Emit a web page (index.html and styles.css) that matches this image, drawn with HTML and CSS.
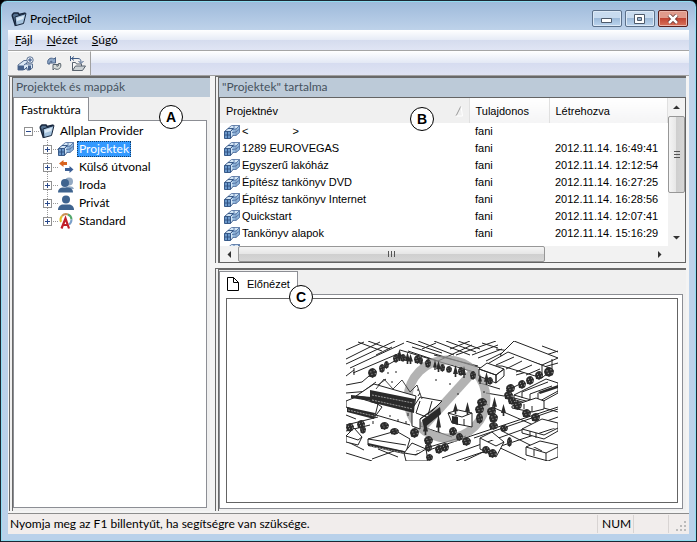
FILE: index.html
```html
<!DOCTYPE html>
<html lang="hu">
<head>
    <meta charset="UTF-8">
    <meta name="viewport" content="width=device-width, initial-scale=1.0">
    <title>ProjectPilot</title>
    <link rel="stylesheet" href="styles.css">
</head>
<body>
    <!-- shared icon shapes -->
    <svg class="defs" aria-hidden="true">
        <symbol id="folder" viewBox="0 0 16 16">
            <path d="M1 4l2-2h4l1 1.500 6-1.500v3L5 14.500z" fill="#54708f"/>
            <path d="M1 4l3.500 11M1 4l2-2h4l1 1.500 6.500-1.500" fill="none" stroke="#17263c" stroke-width="1.500"/>
            <path d="M4 6l11-3.500-2.500 10L5 14.500z" fill="#a5c3de" stroke="#17263c"/>
            <path d="M5.500 7l7.500-2.300-.8 3.300L6 10z" fill="#dbe9f5"/>
        </symbol>
        <symbol id="project" viewBox="0 0 16 14">
            <path d="M.5 6.500L7 1l8.500-.5v7.500l-4 3H8l-1.500 2.500h-6z" fill="#d3e5f5"/>
            <path d="M8.500 4l3-1v7h-3zM12.500 3.500l3-2.500v6.500l-3 2.500z" fill="#8fb5db"/>
            <path d="M4 3.500L7.500.5H15.500v7L12 10.500H8.500M8 4.500L12 4l3.500-3.500M12 4v6.500M8 7.500l4-.5 3.500-3M6.500 6.500L10 3V.5" stroke="#47689a" stroke-width=".8" fill="none"/>
            <path d="M.5 6.500h6v7h-6z" fill="#6b98ca" stroke="#2c4f80" stroke-width=".9"/>
            <path d="M.5 6.500L4 3.500h5L6.500 6.500M6.500 13.500L9 10.500M3.500 6.500v7M.5 10h6" stroke="#2c4f80" stroke-width=".9" fill="none"/>
        </symbol>
        <symbol id="person" viewBox="0 0 16 16">
            <circle cx="8" cy="4.500" r="4"/>
            <path d="M0 15c0-4 3-5.500 5-5.500h6c2 0 5 1.500 5 5.500z"/>
        </symbol>
        <symbol id="bush" viewBox="0 0 8 8" preserveAspectRatio="none">
            <path d="M4 0L5.500.3 7 1.500 8 3 7.600 5 7 6.500 5 7.300 4 8 3 7.300 1 7 .6 5.500 0 4 .5 2 2 .6z" fill="#2b2b2b"/>
            <path d="M2 3h1M5 2h1M3 5h1M6 4.500h1" stroke="#8a8a8a"/>
        </symbol>
        <symbol id="fir" viewBox="0 0 6 12" preserveAspectRatio="none">
            <path d="M3 0L4 3 5 6 6 9H4v3H2V9H0l1-3 1-3z" fill="#2b2b2b"/>
        </symbol>
    </svg>

    <div class="window">
        <header class="titlebar">
            <svg class="title-icon"><use href="#folder"/></svg>
            <span class="title">ProjectPilot</span>
            <div class="window-buttons">
                <button type="button" aria-label="Kis méret"><svg viewBox="0 0 14 10"><path d="M1.500 4.500h10v4h-10z" fill="#fff" stroke="#4d5a6b"/></svg></button>
                <button type="button" aria-label="Teljes méret"><svg viewBox="0 0 14 10"><path d="M1.500.5h10v9h-10z" fill="#fff" stroke="#4d5a6b"/><path d="M4.500 3.500h4v3h-4z" fill="#9ab4d0" stroke="#4d5a6b"/></svg></button>
                <button type="button" class="close" aria-label="Bezárás"><svg viewBox="0 0 14 10"><path d="M3 1l8 8M11 1l-8 8" stroke="#5c2a28" stroke-width="4"/><path d="M3 1l8 8M11 1l-8 8" stroke="#fff" stroke-width="2.500"/></svg></button>
            </div>
        </header>

        <nav class="menubar">
            <a href="#"><u>F</u>ájl</a>
            <a href="#"><u>N</u>ézet</a>
            <a href="#"><u>S</u>úgó</a>
        </nav>

        <div class="toolbar">
            <div class="tools">
                <button type="button" aria-label="Új projekt">
                    <svg viewBox="0 0 18 16">
                        <path d="M1 9l6-4.500h4.500L9 8h6.500v4l-3 2H10v-2L6 14H1z" fill="#dce8f4" stroke="#5b7192"/>
                        <path d="M1 9.500h6V14H1zM11 9.500h3V14h-3z" fill="#46618a"/>
                        <path d="M7 14l3-3M7 9l3-2" stroke="#46618a" fill="none"/>
                        <circle cx="13" cy="4" r="3.200" fill="#eef3fa" stroke="#5b7192"/>
                        <path d="M13 2v4M11 4h4" stroke="#2f4d7e"/>
                    </svg>
                </button>
                <span class="divider"></span>
                <button type="button" aria-label="Frissítés">
                    <svg viewBox="0 0 18 16">
                        <path d="M2 8C.5 4 4 .5 8 3l1.500-1.500V7H4.500L6 5.500C4.500 4.500 3.500 6 4 8z" fill="#8fa9c9" stroke="#4c6489"/>
                        <path d="M14.500 7.500c1.500 4-2 7.500-6 5L7 14V8.500h5L10.500 10c1.500 1 2.500-.5 2-2.500z" fill="#d6dbd8" stroke="#59656e"/>
                    </svg>
                </button>
                <button type="button" aria-label="Megnyitás">
                    <svg viewBox="0 0 18 16">
                        <path d="M3.500 14.500v-8h3l1 1.500h5v2.500" fill="#f7f7f7" stroke="#59636e"/>
                        <path d="M3.500 14.500l3-4.500h10l-3 4.500z" fill="#cdd3d6" stroke="#59636e"/>
                        <path d="M1.500 0v5M1.500 2.500H9c2 0 3 1 3 4M5 .5l-2.500 2L5 4.500M9.500 5l2.500 2.500L14.500 5" stroke="#3f5b85" fill="none"/>
                    </svg>
                </button>
            </div>
        </div>

        <main class="content">
            <section class="side">
                <h2 class="caption">Projektek és mappák</h2>
                <button type="button" class="tab">Fastruktúra</button>
                <div class="tree">
                    <div class="node root">
                        <button type="button" class="toggle" aria-label="Összecsukás"><svg viewBox="0 0 9 9"><path d="M2 4.500h5"/></svg></button>
                        <span class="dots"></span>
                        <svg class="node-icon"><use href="#folder"/></svg>
                        <a href="#">Allplan Provider</a>
                    </div>
                    <ul class="branch">
                        <li class="node">
                            <button type="button" class="toggle" aria-label="Kibontás"><svg viewBox="0 0 9 9"><path d="M2 4.500h5M4.500 2v5"/></svg></button>
                            <span class="dots"></span>
                            <svg class="node-icon"><use href="#project"/></svg>
                            <a href="#" class="selected">Projektek</a>
                        </li>
                        <li class="node">
                            <button type="button" class="toggle" aria-label="Kibontás"><svg viewBox="0 0 9 9"><path d="M2 4.500h5M4.500 2v5"/></svg></button>
                            <span class="dots"></span>
                            <svg class="node-icon" viewBox="0 0 16 16">
                                <path d="M1 4.500l4.500-3.500v2H9v3H5.500V8z" fill="#d9641e"/>
                                <path d="M15.500 10.500l-4-3.500v2H7v3h4.500v2z" fill="#3c5f96"/>
                            </svg>
                            <a href="#">Külső útvonal</a>
                        </li>
                        <li class="node">
                            <button type="button" class="toggle" aria-label="Kibontás"><svg viewBox="0 0 9 9"><path d="M2 4.500h5M4.500 2v5"/></svg></button>
                            <span class="dots"></span>
                            <svg class="node-icon" viewBox="0 0 16 16">
                                <circle cx="11" cy="4.500" r="4" fill="#93a9c2"/>
                                <path d="M7 12c0-3 8-4 9 0z" fill="#93a9c2"/>
                                <circle cx="7" cy="6" r="4" fill="#3f648f"/>
                                <path d="M0 15.500c0-4 3-5 5-5h4c3 0 6 1 6 5z" fill="#3f648f"/>
                            </svg>
                            <a href="#">Iroda</a>
                        </li>
                        <li class="node">
                            <button type="button" class="toggle" aria-label="Kibontás"><svg viewBox="0 0 9 9"><path d="M2 4.500h5M4.500 2v5"/></svg></button>
                            <span class="dots"></span>
                            <svg class="node-icon person"><use href="#person"/></svg>
                            <a href="#">Privát</a>
                        </li>
                        <li class="node">
                            <button type="button" class="toggle" aria-label="Kibontás"><svg viewBox="0 0 9 9"><path d="M2 4.500h5M4.500 2v5"/></svg></button>
                            <span class="dots"></span>
                            <svg class="node-icon" viewBox="0 0 16 16">
                                <g fill="none" stroke-width="2">
                                    <path d="M3 9a5.500 5.500 0 0 1 1-6" stroke="#e2c12e"/>
                                    <path d="M4 3a5.500 5.500 0 0 1 6-1.500" stroke="#c99056"/>
                                    <path d="M10 1.500a5.500 5.500 0 0 1 3.500 5" stroke="#52a76a"/>
                                    <path d="M13.500 6.500a6 6 0 0 1-2.500 5" stroke="#7a9fc9"/>
                                </g>
                                <path d="M3.500 15.500L7.500 5.500 11 15.500M5 12h5" fill="none" stroke="#c2202a" stroke-width="2.200"/>
                            </svg>
                            <a href="#">Standard</a>
                        </li>
                    </ul>
                </div>
                <span class="marker marker-a">A</span>
            </section>

            <div class="main">
                <section class="list-panel">
                    <h2 class="caption">"Projektek" tartalma</h2>
                    <div class="list-box">
                        <div class="list">
                            <table>
                                <thead>
                                    <tr>
                                        <th class="col-name"><span class="sort-head">Projektnév <svg viewBox="0 0 8 12"><path d="M1 11L6 1" stroke="#999"/><path d="M6 1l1.500 10H1" stroke="#fff" fill="none"/></svg></span></th>
                                        <th class="col-owner">Tulajdonos</th>
                                        <th>Létrehozva</th>
                                    </tr>
                                </thead>
                                <tbody>
                                    <tr><td><svg><use href="#project"/></svg><span class="blank-name"><span>&lt;</span><span>&gt;</span></span></td><td>fani</td><td></td></tr>
                                    <tr><td><svg><use href="#project"/></svg>1289 EUROVEGAS</td><td>fani</td><td>2012.11.14. 16:49:41</td></tr>
                                    <tr><td><svg><use href="#project"/></svg>Egyszerű lakóház</td><td>fani</td><td>2012.11.14. 12:12:54</td></tr>
                                    <tr><td><svg><use href="#project"/></svg>Építész tankönyv DVD</td><td>fani</td><td>2012.11.14. 16:27:25</td></tr>
                                    <tr><td><svg><use href="#project"/></svg>Építész tankönyv Internet</td><td>fani</td><td>2012.11.14. 16:28:56</td></tr>
                                    <tr><td><svg><use href="#project"/></svg>Quickstart</td><td>fani</td><td>2012.11.14. 12:07:41</td></tr>
                                    <tr><td><svg><use href="#project"/></svg>Tankönyv alapok</td><td>fani</td><td>2012.11.14. 15:16:29</td></tr>
                                    <tr><td><svg><use href="#project"/></svg></td><td></td><td></td></tr>
                                </tbody>
                            </table>
                        </div>
                        <div class="scroll-v">
                            <button type="button" aria-label="Fel"><svg viewBox="0 0 7 7"><path d="M0 5l3.500-3.500L7 5z"/></svg></button>
                            <span class="thumb"><svg viewBox="0 0 8 8"><path d="M1 .5h6M1 3.500h6M1 6.500h6"/></svg></span>
                            <span class="track"></span>
                            <button type="button" aria-label="Le"><svg viewBox="0 0 7 7"><path d="M0 2l3.500 3.500L7 2z"/></svg></button>
                        </div>
                        <div class="scroll-h">
                            <button type="button" aria-label="Balra"><svg viewBox="0 0 7 7"><path d="M5 0L1.500 3.500 5 7z"/></svg></button>
                            <span class="thumb"><svg viewBox="0 0 8 8"><path d="M.5 1v6M3.500 1v6M6.500 1v6"/></svg></span>
                            <span class="track"></span>
                            <button type="button" aria-label="Jobbra"><svg viewBox="0 0 7 7"><path d="M2 0l3.500 3.500L2 7z"/></svg></button>
                        </div>
                    </div>
                    <span class="marker marker-b">B</span>
                </section>

                <section class="preview-panel">
                    <button type="button" class="tab preview-tab">
                        <svg viewBox="0 0 12 14"><path d="M.5.5h6l5 5v8H.5zM6.500.5v5h5" fill="#fff" stroke="#000"/></svg>
                        Előnézet
                    </button>
                    <div class="preview-page">
                        <div class="preview">
                            <svg class="scene" viewBox="0 0 212 120" role="img" aria-label="Előnézet">
                                <!-- roads and plot lines -->
                                <g fill="none" stroke="#222">
                                    <path d="M0 9L18 1M0 23L49 0M4 27L58 2M12 1l24 9M22 0l22 8M60 0l36 12M72 0l36 14M7 32L54 12M0 35l8-6M36 27l18-10M62 10l30 10 34-16M88 0l36 14M100 0l30 11M112 0l22 8M104 8L124 0M110 14L150 0"/>
                                    <path d="M0 44l16-3 14-12M0 52l24-2M8 57l22-16M24 50L40 38M0 66l30-4M0 84l32-8M0 90l24-6M0 112l26 8M22 100l26 10-22 8M32 108l20 8M42 104l20 9M0 100l18 9"/>
                                    <path d="M62 116L212 66M96 117L212 76M110 120L212 86M70 110l50-15M128 97L212 68M140 52l18 3M146 66l46 20M166 58l46 13M118 120l32-15M150 105l30 14M156 90l40 20"/>
                                    <path d="M134 42l20 6M170 34l42-12M176 22l36-12M160 50l12-6M134 60l8 4M196 5l16 6M150 8l14 2"/>
                                    <path d="M54 9L128 31M66 6l72 22M88 14l44 11M76 8l14-6M126 14l26-10M132 17l24-9M140 20l18-9M0 18l34-17M30 14l16-8M136 2l16 5M8 34v-7M0 74l10 4M66 82l40 14M30 74l34 10"/>
                                </g>
                                <!-- no-entry ring -->
                                <g class="ring" fill="none" stroke="#999" stroke-opacity=".75">
                                    <circle cx="101" cy="58" r="39"/>
                                    <path d="M77 86L126 32"/>
                                </g>
                                <!-- buildings -->
                                <g fill="#fff" stroke="#222">
                                    <path d="M154 14l14-14 44 17-16 7-12-4z"/>
                                    <path d="M138 25l24-14 44 17-10 9-40-12zM150 24l18-8M160 28l16-8M170 31l16-7M180 34l14-6M196 24v12M206 18v10"/>
                                    <path d="M133 28l8-6 17 6-8 6zM133 28v7l17 7v-8zM150 34l8-6v7l-8 7z"/>
                                    <path d="M0 60l10-4 22 7-3 12-29-9zM30 62l6 4-8 11"/>
                                    <path d="M22 98l28-8 14 8-4 13-38-7zM22 98l38 6"/>
                                    <path d="M10 55l18-12 42 12-2 12-44-10z"/>
                                    <path d="M66 68l8-12 22 4-10 10-12 8v10l-8-3zM74 60l-4 12 16 6M86 60l-4 14M74 78l16-12 6-6"/>
                                    <path d="M168 54l32-16 12 4v10l-20 11-24-6zM168 54l24 7 20-11M176 57v-6l26-10M184 59v-6l22-8M192 52v8"/>
                                    <path d="M166 65l24-8 8 3v8l-12 3-20-4zM178 63v5M186 65v6"/>
                                    <path d="M176 88l20-10 16 4v8l-14 8-22-6zM176 88l22 6 14-7M184 90v5M190 92v5"/>
                                    <path d="M180 106l14-6 18 4v12l-10 4-22-6zM180 106l20 6 12-6M188 109v6M200 112v8"/>
                                    <path d="M134 97l12-6 12 10-8 15-16-8zM134 97l16 8 8-4"/>
                                    <path d="M58 112l8-10 14 6 2 12H60zM58 112l12 2 10-6M0 95l8-8 8 9-4 8-12-3zM0 95l12 4 4-3"/>
                                    <path d="M102 72l10-3 14 3v14l-20-4zM102 72l14 4 10-4M110 75v8M118 78v6"/>
                                </g>
                                <!-- dark facades -->
                                <g fill="#2a2a2a">
                                    <path d="M24 49l45 9-1 14-44-11z"/>
                                    <path d="M1 66l28 6-1 6-27-7zM22 102l36 8v3l-36-8zM5 54l20 2v4L5 57z"/>
                                    <path d="M76 79l18-13 1 7-17 14z"/>
                                    <path d="M106 75l6 1v8l-6-2zM192 51l20-7v3l-18 6z"/>
                                </g>
                                <g fill="none" stroke="#999" stroke-dasharray="2 1">
                                    <path d="M26 54l41 8M26 59l41 9M2 69l26 6M24 105l34 7"/>
                                </g>
                                <path d="M30 48l8-10 9 10 9-9 8 12 7-7 5 14" fill="none" stroke="#444"/>
                                <!-- trees -->
                                <g>
                                    <use href="#bush" x="22" y="27" width="9" height="10"/>
                                    <use href="#bush" x="33" y="23" width="6" height="9"/>
                                    <use href="#bush" x="38" y="20" width="5" height="8"/>
                                    <use href="#bush" x="47" y="13" width="6" height="9"/>
                                    <use href="#fir" x="51" y="8" width="5" height="12"/>
                                    <use href="#bush" x="54" y="13" width="6" height="8"/>
                                    <use href="#fir" x="59" y="11" width="5" height="12"/>
                                    <use href="#fir" x="62" y="13" width="5" height="10"/>
                                    <use href="#bush" x="68" y="14" width="7" height="9"/>
                                    <use href="#bush" x="73" y="16" width="4" height="8"/>
                                    <use href="#bush" x="79" y="18" width="6" height="9"/>
                                    <use href="#fir" x="87" y="19" width="4" height="10"/>
                                    <use href="#fir" x="90" y="20" width="5" height="11"/>
                                    <use href="#bush" x="94" y="23" width="5" height="8"/>
                                    <use href="#bush" x="100" y="25" width="6" height="7"/>
                                    <use href="#fir" x="107" y="24" width="5" height="12"/>
                                    <use href="#bush" x="112" y="26" width="6" height="9"/>
                                    <use href="#fir" x="116" y="25" width="4" height="12"/>
                                    <use href="#bush" x="124" y="30" width="6" height="9"/>
                                    <use href="#fir" x="132" y="33" width="4" height="10"/>
                                    <use href="#fir" x="138" y="31" width="5" height="13"/>
                                    <use href="#bush" x="141" y="36" width="6" height="8"/>
                                    <use href="#bush" x="160" y="43" width="9" height="9"/>
                                    <use href="#bush" x="158" y="50" width="9" height="9"/>
                                    <use href="#bush" x="162" y="56" width="8" height="8"/>
                                    <use href="#bush" x="167" y="60" width="9" height="9"/>
                                    <use href="#bush" x="172" y="39" width="8" height="9"/>
                                    <use href="#bush" x="180" y="35" width="8" height="9"/>
                                    <use href="#bush" x="189" y="30" width="8" height="9"/>
                                    <use href="#bush" x="198" y="26" width="10" height="10"/>
                                    <use href="#bush" x="176" y="68" width="9" height="9"/>
                                    <use href="#bush" x="185" y="72" width="9" height="9"/>
                                    <use href="#bush" x="131" y="57" width="10" height="9"/>
                                    <use href="#bush" x="129" y="64" width="9" height="9"/>
                                    <use href="#bush" x="130" y="72" width="7" height="11"/>
                                    <use href="#bush" x="141" y="66" width="9" height="9"/>
                                    <use href="#bush" x="143" y="72" width="9" height="10"/>
                                    <use href="#fir" x="146" y="56" width="5" height="13"/>
                                    <use href="#fir" x="155" y="63" width="5" height="12"/>
                                    <use href="#bush" x="143" y="81" width="9" height="8"/>
                                    <use href="#bush" x="154" y="84" width="8" height="7"/>
                                    <use href="#fir" x="119" y="61" width="5" height="13"/>
                                    <use href="#fir" x="107" y="62" width="5" height="11"/>
                                    <use href="#fir" x="90" y="73" width="5" height="18"/>
                                    <use href="#fir" x="77" y="80" width="5" height="14"/>
                                    <use href="#bush" x="34" y="81" width="9" height="8"/>
                                    <use href="#bush" x="44" y="87" width="9" height="7"/>
                                    <use href="#bush" x="0" y="82" width="8" height="9"/>
                                    <use href="#bush" x="11" y="79" width="8" height="9"/>
                                    <use href="#bush" x="14" y="85" width="6" height="8"/>
                                    <use href="#bush" x="64" y="87" width="9" height="10"/>
                                    <use href="#bush" x="78" y="95" width="9" height="9"/>
                                    <use href="#bush" x="79" y="102" width="7" height="9"/>
                                    <use href="#bush" x="89" y="104" width="8" height="9"/>
                                    <use href="#bush" x="95" y="102" width="8" height="9"/>
                                    <use href="#bush" x="103" y="86" width="8" height="9"/>
                                    <use href="#bush" x="110" y="92" width="7" height="8"/>
                                    <use href="#bush" x="116" y="96" width="9" height="9"/>
                                    <use href="#bush" x="136" y="105" width="8" height="8"/>
                                    <use href="#bush" x="142" y="108" width="9" height="9"/>
                                    <use href="#bush" x="161" y="96" width="5" height="10"/>
                                    <use href="#bush" x="80" y="113" width="7" height="7"/>
                                </g>
                                <path d="M42 31v2M46 40v2M72 48v2M74 52l-2 3M62 72v3M44 74v2M52 78v3M60 80v3M27 80v3M104 42v2M112 52v2M138 50v2M50 30v2M90 38v2" stroke="#222" fill="none"/>
                            </svg>
                        </div>
                    </div>
                    <span class="marker marker-c">C</span>
                </section>
            </div>
        </main>

        <footer class="statusbar">
            <span class="message">Nyomja meg az F1 billentyűt, ha segítségre van szüksége.</span>
            <span class="cell">NUM</span>
            <span class="cell empty"></span>
            <svg class="grip" viewBox="0 0 12 12"><path d="M9 1h2v2H9zM9 5h2v2H9zM5 5h2v2H5zM9 9h2v2H9zM5 9h2v2H5zM1 9h2v2H1z" fill="#bbb"/></svg>
        </footer>
    </div>
</body>
</html>
```
FILE: styles.css
```css
* {
    box-sizing: border-box;
}

body {
    margin: 0;
    background: #000;
    color: #000;
    font-family: Lato, "Open Sans", sans-serif;
    font-size: 12px;
    line-height: 18px;
}

button {
    margin: 0;
    padding: 0;
    border: 0;
    background: none;
    font: inherit;
    color: inherit;
}

a {
    color: inherit;
    text-decoration: none;
}

svg {
    display: block;
    flex: none;
}

.defs {
    display: none;
}

/* window frame */
.window {
    display: flex;
    flex-direction: column;
    height: 100vh;
    padding: 0 7px 7px;
    border: 1px solid #1b2733;
    border-radius: 7px 7px 0 0;
    background: linear-gradient(#9db9da, #bfd3ea 30px, #b9d1ea);
    box-shadow: inset 0 0 0 1px #8fdcf0;
}

.titlebar {
    display: flex;
    align-items: center;
    height: 29px;
    padding: 6px 0 0 3px;
}

.title-icon {
    width: 16px;
    height: 16px;
}

.title {
    flex: 1;
    margin-left: 3px;
}

.window-buttons {
    display: flex;
    gap: 3px;
    margin-right: 1px;
}

.window-buttons button {
    display: flex;
    align-items: center;
    justify-content: center;
    width: 30px;
    height: 17px;
    border: 1px solid #5b708a;
    border-radius: 2px;
    background: linear-gradient(#c8dbef 50%, #9dbad9 50%, #bdd5ee);
    box-shadow: inset 0 0 0 1px #dce9f6;
}

.window-buttons svg {
    width: 14px;
    height: 10px;
}

.window-buttons .close {
    border-color: #5a1e1c;
    background: linear-gradient(#e09a8c 50%, #c14534 50%, #d9735c);
    box-shadow: inset 0 0 0 1px #eab5aa;
}

/* menu and toolbar */
.menubar {
    display: flex;
    gap: 14px;
    height: 20px;
    padding-left: 7px;
    background: linear-gradient(#fff, #e6ebf6 50%, #d5dcee 50%, #e0e5f4);
}

.menubar a {
    line-height: 20px;
}

.toolbar {
    height: 25px;
    border-top: 1px solid #a5a5a5;
    background: linear-gradient(#fff, #e3e8f5 50%, #d6dcf0 50%, #dfe3f3);
}

.tools {
    display: flex;
    align-items: center;
    width: 83px;
    height: 24px;
    padding-left: 9px;
    border-top: 1px solid #fff;
    border-right: 1px solid #a0a0a0;
    background: #f0f0f0;
}

.tools button {
    margin-right: 5px;
}

.tools svg {
    width: 18px;
    height: 16px;
}

.divider {
    width: 1px;
    height: 20px;
    margin-right: 6px;
    background: #a0a0a0;
}

/* two-column work area */
.content {
    display: grid;
    grid-template-columns: 201px 1fr;
    gap: 5px;
    flex: 1;
    min-height: 0;
    padding: 0 3px 2px 1px;
    border-top: 1px solid #a0a0a0;
    background: #f4f4f4;
}

.side {
    position: relative;
    display: flex;
    flex-direction: column;
    align-items: flex-start;
    padding-right: 3px;
    border-top: 2px solid #696969;
    border-left: 4px double #696969;
    background: #f0f0f0;
}

.caption {
    align-self: stretch;
    height: 19px;
    margin: 0;
    padding-left: 3px;
    background: #bccad8;
    color: #46525e;
    font-size: 12px;
    font-weight: normal;
}

.side .caption {
    margin-right: -3px;
}

.tab {
    position: relative;
    z-index: 1;
    height: 24px;
    margin-bottom: -1px;
    padding: 0 7px;
    border: 1px solid #8c8e94;
    border-bottom: 0;
    background: #fff;
}

.tree {
    align-self: stretch;
    flex: 1;
    margin-bottom: 3px;
    padding: 1px 0 0 10px;
    border: 1px solid #8c8e94;
    background: #fff;
}

.node {
    display: flex;
    align-items: center;
    height: 18px;
}

.branch {
    margin: 0 0 0 4px;
    padding: 0 0 0 15px;
    list-style: none;
    background: repeating-linear-gradient(#999 0 1px, #fff 1px 2px) 19px 0 / 1px 82px no-repeat;
}

.toggle {
    width: 9px;
    height: 9px;
    border: 1px solid #919191;
    background: #fff;
}

.toggle svg {
    width: 9px;
    height: 9px;
    margin: -1px;
    stroke: #2b4a8b;
}

.dots {
    width: 6px;
    height: 1px;
    background: repeating-linear-gradient(90deg, #fff 0 1px, #999 1px 2px);
}

.node-icon {
    width: 16px;
    height: 16px;
}

.node a {
    margin-left: 3px;
    padding: 0 2px;
    line-height: 16px;
}

.node .selected {
    background: #3399ff;
    color: #fff;
    outline: 1px dotted #14406c;
    outline-offset: -1px;
}

.person {
    fill: #3f648f;
}

/* right side */
.main {
    display: grid;
    grid-template-rows: 187px 1fr;
    gap: 5px;
    min-width: 0;
    min-height: 0;
}

.list-panel,
.preview-panel {
    position: relative;
    display: flex;
    flex-direction: column;
    min-height: 0;
    border-top: 2px solid #696969;
    border-left: 4px double #696969;
    background: #f0f0f0;
}

.list-box {
    display: grid;
    grid-template-columns: 1fr 17px;
    grid-template-rows: 1fr 16px;
    flex: 1;
    min-height: 0;
    border: 1px solid #646464;
    background: #fff;
}

.list {
    overflow: hidden;
    font-family: "Liberation Sans", Arial, sans-serif;
    font-size: 11px;
}

.list table {
    width: 100%;
    border-collapse: collapse;
    table-layout: fixed;
}

.list th {
    height: 25px;
    padding: 0 6px;
    border-right: 1px solid #e0e0e0;
    background: linear-gradient(#fff, #f4f4f5);
    font-weight: normal;
    text-align: left;
}

.list .col-name {
    width: 249px;
    background: #f0f0f0;
}

.list .col-owner {
    width: 80px;
}

.sort-head {
    display: flex;
    align-items: center;
    justify-content: space-between;
}

.sort-head svg {
    width: 8px;
    height: 12px;
}

.list td {
    height: 17px;
    padding: 0 6px;
    line-height: 17px;
    white-space: nowrap;
}

.list td:first-child {
    padding-left: 4px;
}

.list td svg {
    display: inline-block;
    width: 16px;
    height: 14px;
    margin-right: 2px;
    vertical-align: middle;
}

.blank-name {
    display: inline-flex;
    gap: 44px;
}

.scroll-v,
.scroll-h {
    display: flex;
    background: #f2f2f2;
}

.scroll-v {
    flex-direction: column;
}

.scroll-h {
    grid-column: 1 / 3;
}

.scroll-v button,
.scroll-h button,
.thumb {
    display: flex;
    align-items: center;
    justify-content: center;
}

.scroll-v button {
    height: 18px;
}

.scroll-h button {
    width: 18px;
}

.scroll-v button svg,
.scroll-h button svg {
    width: 7px;
    height: 7px;
    fill: #333;
}

.thumb {
    border: 1px solid #979797;
    border-radius: 2px;
    background: linear-gradient(90deg, #f4f4f4, #e6e6e6 50%, #cfcfcf 50%, #d6d6d6);
}

.thumb svg {
    width: 8px;
    height: 8px;
    stroke: #555;
}

.scroll-v .thumb {
    height: 77px;
}

.scroll-h .thumb {
    flex: 308;
    background: linear-gradient(#f4f4f4, #e6e6e6 50%, #cfcfcf 50%, #d6d6d6);
}

.scroll-v .track {
    flex: 1;
}

.scroll-h .track {
    flex: 106;
}

.scroll-h button:last-child {
    margin-right: 17px;
}

/* preview */
.preview-tab {
    display: flex;
    align-items: center;
    align-self: flex-start;
    gap: 8px;
    margin-top: 1px;
    font-family: "Liberation Sans", Arial, sans-serif;
    font-size: 11px;
}

.preview-tab svg {
    width: 12px;
    height: 14px;
}

.preview-page {
    display: flex;
    flex: 1;
    min-height: 0;
    margin: 0 3px 2px 0;
    padding: 3px 4px 5px 6px;
    border: 1px solid #8c8e94;
    background: #fff;
}

.preview {
    display: flex;
    align-items: center;
    justify-content: center;
    flex: 1;
    border: 1px solid #646464;
}

.scene {
    width: 212px;
    height: 120px;
}

.ring {
    stroke-width: 9px;
}

/* callout letters over the panels */
.marker {
    position: absolute;
    z-index: 2;
    width: 24px;
    height: 24px;
    border: 1px solid #000;
    border-radius: 50%;
    background: #fff;
    font: bold 14px/22px "Liberation Sans", Arial, sans-serif;
    text-align: center;
}

.marker-a {
    top: 27px;
    left: 146px;
}

.marker-b {
    top: 29px;
    left: 191px;
}

.marker-c {
    top: 15px;
    left: 70px;
}

/* status bar */
.statusbar {
    display: flex;
    align-items: center;
    height: 21px;
    padding-left: 2px;
    border-top: 1px solid #8c8c8c;
    background: #f1edec;
}

.message {
    flex: 1;
}

.cell {
    width: 36px;
    padding-left: 4px;
    border-left: 1px solid #d8d4d3;
}

.empty {
    height: 18px;
    border-right: 1px solid #d8d4d3;
}

.grip {
    width: 12px;
    height: 12px;
    margin: 4px 2px 0 6px;
}
```
